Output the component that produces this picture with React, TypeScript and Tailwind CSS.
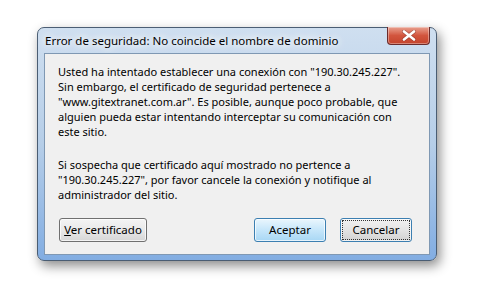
import React from 'react';

const font = { fontFamily: '"Noto Sans", "Open Sans", sans-serif' };

const CloseGlyph: React.FC = () => (
  <svg width="14" height="11" viewBox="0 0 14 11">
    <path d="M2 1.5 L12 9.5 M12 1.5 L2 9.5" stroke="#5a1c1c" strokeWidth="4" strokeLinecap="round" opacity="0.35" />
    <path d="M2 1.5 L12 9.5 M12 1.5 L2 9.5" stroke="#ffffff" strokeWidth="2.6" strokeLinecap="round" />
  </svg>
);

const DialogButton: React.FC<{ label: React.ReactNode; variant?: 'plain' | 'default' | 'focus'; width: string }> = ({
  label,
  variant = 'plain',
  width,
}) => {
  const skin =
    variant === 'default'
      ? 'border-[#3c7fb1] bg-gradient-to-b from-[#eaf6fd] via-[#c6e6fa] to-[#a8d7f4]'
      : variant === 'focus'
      ? 'border-[#3c7fb1] bg-gradient-to-b from-[#f2f2f2] via-[#e4e4e4] to-[#d2d2d2]'
      : 'border-[#707070] bg-gradient-to-b from-[#f4f4f4] via-[#e9e9e9] to-[#d6d6d6]';
  return (
    <div className={`${width} h-[24px] shrink-0 rounded-[3px] border ${skin} p-[1px] shadow-[inset_0_0_0_1px_rgba(255,255,255,0.7)]`}>
      <div
        className={`flex h-full w-full items-center justify-center whitespace-nowrap text-[11.5px] leading-none text-black ${
          variant === 'focus' ? 'border border-dotted border-[#333]' : ''
        }`}
      >
        {label}
      </div>
    </div>
  );
};

const lines1 = [
  'Usted ha intentado establecer una conexión con "190.30.245.227".',
  'Sin embargo, el certificado de seguridad pertenece a',
  '"www.gitextranet.com.ar". Es posible, aunque poco probable, que',
  'alguien pueda estar intentando interceptar su comunicación con',
  'este sitio.',
];

const lines2 = [
  'Si sospecha que certificado aquí mostrado no pertence a',
  '"190.30.245.227", por favor cancele la conexión y notifique al',
  'administrador del sitio.',
];

export default function App() {
  return (
    <div className="h-[306px] w-[479px] bg-white pl-[37px] pt-[27px]" style={font}>
      <div className="relative flex h-[234px] w-[400px] flex-col rounded-[7px] border border-[#4a5d73] bg-gradient-to-b from-[#cfdff0] via-[#b6cee8] to-[#82ade2] shadow-[3px_5px_12px_rgba(0,0,0,0.45)]">
        {/* title bar */}
        <div className="flex h-[25px] shrink-0 items-center pl-[7px]">
          <span className="whitespace-nowrap text-[11.5px] text-black [text-shadow:0_0_6px_#fff,0_0_10px_#fff,0_0_14px_#fff]">
            Error de seguridad: No coincide el nombre de dominio
          </span>
        </div>
        <div className="absolute right-[6px] top-[-1px] flex h-[18px] w-[43px] items-center justify-center rounded-b-[4px] border border-t-0 border-[#6b2b2b] bg-gradient-to-b from-[#e8a08f] via-[#d2553e] to-[#c4442c] shadow-[inset_0_0_0_1px_rgba(255,255,255,0.35)]">
          <CloseGlyph />
        </div>

        {/* client area */}
        <div className="mx-[6px] flex h-[202px] flex-col border border-[#7f98b3] bg-[#f0f0f0]">
          <div className="px-[13px] pt-[10px] text-[11px] leading-[15px] text-black">
            <div>
              {lines1.map((l) => (
                <div key={l} className="whitespace-nowrap">{l}</div>
              ))}
            </div>
            <div className="mt-[18px]">
              {lines2.map((l) => (
                <div key={l} className="whitespace-nowrap">{l}</div>
              ))}
            </div>
          </div>
          <div className="mt-auto mb-[12px] flex items-center pl-[14px] pr-[17px]">
            <DialogButton
              width="w-[88px]"
              label={
                <span>
                  <span className="underline">V</span>er certificado
                </span>
              }
            />
            <div className="flex-1" />
            <DialogButton width="w-[72px]" variant="default" label="Aceptar" />
            <div className="w-[14px]" />
            <DialogButton width="w-[72px]" variant="focus" label="Cancelar" />
          </div>
        </div>
      </div>
    </div>
  );
}
